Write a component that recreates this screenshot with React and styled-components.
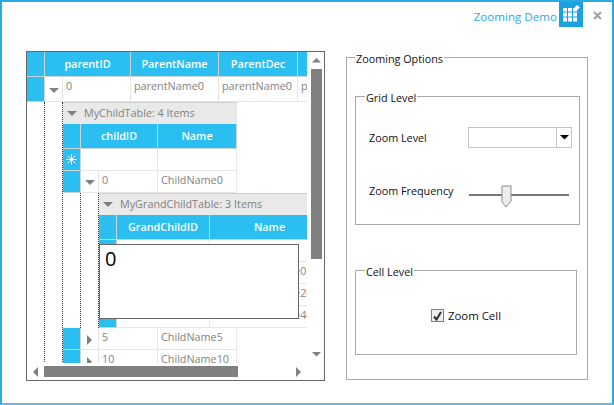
import styled, { createGlobalStyle } from 'styled-components';

const BLUE = '#2bbff1';
const LINE = '#e6e6e6';
const HEAD_LINE = '#c9d3d8';
const FONT = '"Open Sans", "Noto Sans", "Liberation Sans", sans-serif';

const Arrow = ({ dir, size = 10, color = '#808080' }) => {
    const points = {
        down: '0,0 10,0 5,5',
        up: '0,5 10,5 5,0',
        right: '0,0 5,5 0,10',
        left: '5,0 0,5 5,10',
    }[dir];
    const vertical = dir === 'up' || dir === 'down';
    return (
        <svg width={vertical ? size : size / 2} height={vertical ? size / 2 : size} viewBox={vertical ? '0 0 10 5' : '0 0 5 10'}>
            <polygon points={points} fill={color} />
        </svg>
    );
};

const App = () => {
    return (
        <>
            <GlobalStyle />
            <Window>
                <TitleBar>
                    <TitleText>Zooming Demo</TitleText>
                    <AppTile>
                        <svg width="17" height="18" viewBox="0 0 17 18">
                            <g fill="#fff">
                                <rect x="0" y="3" width="4" height="3.5" />
                                <rect x="5" y="3" width="4" height="3.5" />
                                <rect x="10" y="3" width="4" height="3.5" />
                                <rect x="0" y="7.5" width="4" height="4" />
                                <rect x="5" y="7.5" width="4" height="4" />
                                <rect x="10" y="7.5" width="4" height="4" />
                                <rect x="0" y="12.5" width="4" height="4" />
                                <rect x="5" y="12.5" width="4" height="4" />
                                <rect x="10" y="12.5" width="4" height="4" />
                                <polygon points="14,0 17,2.5 14,5 11.5,2.5" />
                            </g>
                        </svg>
                    </AppTile>
                    <CloseButton>
                        <svg width="9" height="9" viewBox="0 0 9 9">
                            <path d="M1 1 L8 8 M8 1 L1 8" stroke="#a3a3a3" strokeWidth="2.2" />
                        </svg>
                    </CloseButton>
                </TitleBar>

                <Body>
                    <GridPanel>
                        <GridTop>
                            <Viewport>
                                <Row>
                                    <RowHead $h={25} />
                                    <HeadCell $w={86}>parentID</HeadCell>
                                    <HeadCell $w={88}>ParentName</HeadCell>
                                    <HeadCell $w={79}>ParentDec</HeadCell>
                                    <HeadCell $w={60} />
                                </Row>
                                <Row>
                                    <RowHead $h={25} />
                                    <Expander $h={25}><Arrow dir="down" /></Expander>
                                    <Cell $w={68} $h={25}>0</Cell>
                                    <Cell $w={88} $h={25}>parentName0</Cell>
                                    <Cell $w={79} $h={25}>parentName0</Cell>
                                    <Cell $w={60} $h={25}>parentName0</Cell>
                                </Row>

                                <Detail>
                                    <Indent />
                                    <Indent />
                                    <Nested>
                                        <GroupBar $w={174}>
                                            <GroupToggle><Arrow dir="down" /></GroupToggle>
                                            MyChildTable: 4 Items
                                        </GroupBar>
                                        <Row>
                                            <RowHead $h={25} />
                                            <HeadCell $w={77}>childID</HeadCell>
                                            <HeadCell $w={79}>Name</HeadCell>
                                        </Row>
                                        <Row>
                                            <RowHead>
                                                <svg width="11" height="11" viewBox="0 0 11 11">
                                                    <path d="M5.5 0 V11 M0 5.5 H11 M1.7 1.7 L9.3 9.3 M9.3 1.7 L1.7 9.3" stroke="#fff" strokeWidth="1" />
                                                </svg>
                                            </RowHead>
                                            <Cell $w={77} />
                                            <Cell $w={79} />
                                        </Row>
                                        <Row>
                                            <RowHead />
                                            <Expander><Arrow dir="down" /></Expander>
                                            <Cell $w={59}>0</Cell>
                                            <Cell $w={79}>ChildName0</Cell>
                                        </Row>

                                        <Detail>
                                            <Indent />
                                            <Indent />
                                            <Nested>
                                                <GroupBar $w={208}>
                                                    <GroupToggle><Arrow dir="down" /></GroupToggle>
                                                    MyGrandChildTable: 3 Items
                                                </GroupBar>
                                                <Row>
                                                    <RowHead $h={25} />
                                                    <HeadCell $w={93}>GrandChildID</HeadCell>
                                                    <HeadCell $w={120}>Name</HeadCell>
                                                </Row>
                                                {grandRows.map((name, i) => (
                                                    <Row key={i}>
                                                        <RowHead />
                                                        <Cell $w={93} />
                                                        <Cell $w={120}>{name}</Cell>
                                                    </Row>
                                                ))}
                                            </Nested>
                                        </Detail>

                                        {childRows.map(row => (
                                            <Row key={row.id}>
                                                <RowHead />
                                                <Expander><Arrow dir="right" /></Expander>
                                                <Cell $w={59}>{row.id}</Cell>
                                                <Cell $w={79}>{row.name}</Cell>
                                            </Row>
                                        ))}
                                    </Nested>
                                </Detail>
                            </Viewport>

                            <VScroll>
                                <ArrowBox><Arrow dir="up" size={9} /></ArrowBox>
                                <VThumb />
                                <VGap />
                                <ArrowBox><Arrow dir="down" size={9} /></ArrowBox>
                            </VScroll>
                        </GridTop>

                        <HScroll>
                            <HArrowBox><Arrow dir="left" size={10} /></HArrowBox>
                            <HThumb />
                            <HGap />
                            <HArrowBox><Arrow dir="right" size={10} /></HArrowBox>
                        </HScroll>

                        <ZoomPopup>0</ZoomPopup>
                    </GridPanel>

                    <Options>
                        <Legend>Zooming Options</Legend>
                        <GridLevel>
                            <Legend>Grid Level</Legend>
                            <FieldRow>
                                <FieldLabel>Zoom Level</FieldLabel>
                                <Combo>
                                    <ComboText />
                                    <ComboButton><Arrow dir="down" size={9} color="#000" /></ComboButton>
                                </Combo>
                            </FieldRow>
                            <FieldRow>
                                <FieldLabel $lh={13}>Zoom Frequency</FieldLabel>
                                <Slider>
                                    <SliderTrack />
                                    <SliderThumb>
                                        <svg width="11" height="23" viewBox="0 0 11 23">
                                            <polygon points="1,1 10,1 10,16 5,22 1,17" fill="#ececec" stroke="#8c8c8c" />
                                        </svg>
                                    </SliderThumb>
                                </Slider>
                            </FieldRow>
                        </GridLevel>
                        <CellLevel>
                            <Legend>Cell Level</Legend>
                            <CheckRow>
                                <CheckBox>
                                    <svg width="9" height="10" viewBox="0 0 9 10">
                                        <path d="M1 5.5 L3.5 8.5 L8 1" fill="none" stroke="#2b2b2b" strokeWidth="2" />
                                    </svg>
                                </CheckBox>
                                Zoom Cell
                            </CheckRow>
                        </CellLevel>
                    </Options>
                </Body>
            </Window>
        </>
    );
};

export default App;

const grandRows = ['', 'GrandChildName0', 'GrandChildName20', 'GrandChildName40'];
const childRows = [
    { id: 5, name: 'ChildName5' },
    { id: 10, name: 'ChildName10' },
];

/* ============ styles ============ */
const GlobalStyle = createGlobalStyle`
    * {
        box-sizing: border-box;
    }

    html, body {
        margin: 0;
        padding: 0;
        background: #fff;
    }
`;

const Window = styled.div`
    width: 614px;
    height: 405px;
    border: 2px solid #2ba9e4;
    border-bottom-color: #5cbde8;
    background: #fff;
    font-family: ${FONT};
    font-size: 10.8px;
    overflow: hidden;
`;

const TitleBar = styled.div`
    height: 45px;
    display: flex;
    align-items: flex-start;
    justify-content: flex-end;
`;

const TitleText = styled.div`
    color: #2ba9e4;
    font-size: 11.6px;
    line-height: 17px;
    margin-top: 6px;
    margin-right: 2px;
`;

const AppTile = styled.div`
    width: 24px;
    height: 25px;
    background: #1ba1e2;
    display: flex;
    align-items: flex-start;
    padding: 3px 0 0 4px;
`;

const CloseButton = styled.div`
    width: 29px;
    height: 26px;
    display: flex;
    align-items: center;
    justify-content: center;
`;

const Body = styled.div`
    display: flex;
    align-items: flex-start;
    gap: 21px;
    padding-left: 24px;
`;

const GridPanel = styled.div`
    position: relative;
    width: 299px;
    height: 330px;
    margin-top: 4px;
    border: 1px solid #666;
    display: flex;
    flex-direction: column;
`;

const GridTop = styled.div`
    display: flex;
    height: 311px;
`;

const Viewport = styled.div`
    width: 280px;
    height: 311px;
    overflow: hidden;
    flex: none;
    color: #828282;
`;

const Row = styled.div`
    display: flex;
    width: max-content;
`;

const RowHead = styled.div`
    width: 18px;
    height: ${p => p.$h || 22}px;
    flex: none;
    background: ${BLUE};
    border-right: 1px solid ${HEAD_LINE};
    border-bottom: 1px solid ${HEAD_LINE};
    display: flex;
    align-items: center;
    justify-content: center;
`;

const HeadCell = styled.div`
    width: ${p => p.$w}px;
    height: 25px;
    flex: none;
    background: ${BLUE};
    color: #fff;
    font-weight: 600;
    text-align: center;
    line-height: 24px;
    border-right: 1px solid ${HEAD_LINE};
    border-bottom: 1px solid ${HEAD_LINE};
`;

const Cell = styled.div`
    width: ${p => p.$w}px;
    height: ${p => p.$h || 22}px;
    flex: none;
    padding: 0 3px;
    line-height: 18px;
    white-space: nowrap;
    overflow: hidden;
    border-right: 1px solid ${LINE};
    border-bottom: 1px solid ${LINE};
`;

const Expander = styled.div`
    width: 18px;
    height: ${p => p.$h || 22}px;
    flex: none;
    border-right: 1px solid ${LINE};
    border-bottom: 1px solid ${LINE};
    display: flex;
    align-items: center;
    justify-content: center;
    padding-top: 2px;
`;

const Detail = styled.div`
    display: flex;
    align-items: stretch;
`;

const Indent = styled.div`
    width: 18px;
    flex: none;
    border-right: 1px dotted #333;
`;

const Nested = styled.div`
    display: flex;
    flex-direction: column;
    min-width: 0;
`;

const GroupBar = styled.div`
    width: ${p => p.$w}px;
    height: 22px;
    padding-bottom: 3px;
    background: #e9e9e9;
    border-top: 1px solid #cfcfcf;
    display: flex;
    align-items: center;
    white-space: nowrap;
`;

const GroupToggle = styled.div`
    width: 21px;
    display: flex;
    justify-content: flex-start;
    padding: 3px 0 0 4px;
`;

const VScroll = styled.div`
    width: 17px;
    flex: none;
    margin-left: 1px;
    display: flex;
    flex-direction: column;
`;

const ArrowBox = styled.div`
    height: 17px;
    display: flex;
    align-items: center;
    justify-content: center;
`;

const VThumb = styled.div`
    width: 11px;
    height: 190px;
    margin-left: 3px;
    background: #808080;
`;

const VGap = styled.div`
    flex: 1;
`;

const HScroll = styled.div`
    width: 280px;
    height: 17px;
    display: flex;
    align-items: center;
`;

const HArrowBox = styled.div`
    width: 17px;
    display: flex;
    justify-content: center;
`;

const HThumb = styled.div`
    width: 194px;
    height: 11px;
    background: #808080;
`;

const HGap = styled.div`
    flex: 1;
`;

const ZoomPopup = styled.div`
    position: absolute;
    left: 72px;
    top: 192px;
    width: 200px;
    height: 75px;
    background: #fff;
    border: 1px solid #666;
    color: #000;
    font-size: 20px;
    line-height: 27px;
    padding-left: 5px;
`;

const Options = styled.fieldset`
    width: 242px;
    height: 333px;
    margin: 0;
    padding: 0 8px;
    border: 1px solid #a9a9a9;
    min-width: 0;
`;

const Legend = styled.legend`
    padding: 4px 1px 0;
    line-height: 16px;
    color: #111;
`;

const GridLevel = styled.fieldset`
    width: 225px;
    height: 139px;
    margin: 19px 0 35px;
    padding: 21px 0 0 9px;
    border: 1px solid #a9a9a9;
    min-width: 0;
`;

const CellLevel = styled.fieldset`
    width: 222px;
    height: 95px;
    margin: 0;
    padding: 0 9px 3px;
    border: 1px solid #a9a9a9;
    min-width: 0;
`;

const FieldRow = styled.div`
    display: flex;
    align-items: flex-start;
    padding-left: 4px;
    margin-bottom: 36px;
`;

const FieldLabel = styled.div`
    width: 99px;
    flex: none;
    line-height: ${p => p.$lh || 21}px;
    color: #111;
`;

const Combo = styled.div`
    width: 104px;
    height: 21px;
    flex: none;
    border: 1px solid #c4c4c4;
    display: flex;
`;

const ComboText = styled.div`
    flex: 1;
`;

const ComboButton = styled.div`
    width: 15px;
    border-left: 1px solid #c4c4c4;
    display: flex;
    align-items: center;
    justify-content: center;
`;

const Slider = styled.div`
    position: relative;
    width: 100px;
    height: 21px;
    margin-left: 1px;
    flex: none;
    display: flex;
    align-items: center;
`;

const SliderTrack = styled.div`
    width: 100%;
    height: 2px;
    background: #777;
`;

const SliderThumb = styled.div`
    position: absolute;
    left: 32px;
    top: 1px;
    display: flex;
`;

const CheckRow = styled.div`
    height: 100%;
    display: flex;
    align-items: center;
    justify-content: center;
    gap: 4px;
    color: #111;
    font-size: 11.4px;
`;

const CheckBox = styled.div`
    width: 13px;
    height: 13px;
    border: 1px solid #1ba1e2;
    background: #eee;
    display: flex;
    align-items: center;
    justify-content: center;
`;
